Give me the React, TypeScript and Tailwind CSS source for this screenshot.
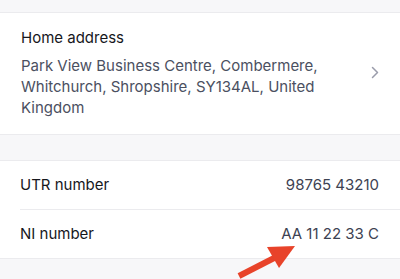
import React from "react";

function Chevron() {
  return (
    <svg width="8" height="13" viewBox="0 0 8 13" className="shrink-0">
      <path d="M1.5 1.5 L6.5 6.5 L1.5 11.5" fill="none" stroke="#9a9cab" strokeWidth="1.5" strokeLinecap="round" strokeLinejoin="round" />
    </svg>
  );
}

function Row({ label, value, divider }: { label: string; value: string; divider?: boolean }) {
  return (
    <div className="pl-5">
      <div className={`flex items-center justify-between pr-[21px] ${divider ? "h-[49px] border-b border-[#ebebee]" : "h-[48px]"}`}>
        <span className="text-[15px] text-[#16171c]">{label}</span>
        <span className="text-[15px] text-[#3d4252]">{value}</span>
      </div>
    </div>
  );
}

export default function App() {
  return (
    <div className="relative h-[279px] w-[400px] overflow-hidden bg-[#f7f7f9]" style={{ fontFamily: "Inter, 'Noto Sans', sans-serif" }}>
      <div className="h-[12px]" />
      <div className="border-y border-[#ebebee] bg-white">
        <div className="flex items-center justify-between pb-[16px] pl-[21px] pr-[21px] pt-[14px]">
          <div className="flex flex-col">
            <span className="text-[15px] leading-[22px] text-[#16171c]">Home address</span>
            <span className="mt-[6px] w-[300px] text-[15px] leading-[21px] text-[#4b5061]">
              Park View Business Centre, Combermere, Whitchurch, Shropshire, SY134AL, United Kingdom
            </span>
          </div>
          <Chevron />
        </div>
      </div>
      <div className="h-[25px]" />
      <div className="border-y border-[#ebebee] bg-white">
        <Row label="UTR number" value="98765 43210" divider />
        <Row label="NI number" value="AA 11 22 33 C" />
      </div>
      <svg className="absolute left-0 top-0" width="400" height="279" viewBox="0 0 400 279">
        <line x1="239" y1="276" x2="280" y2="255" stroke="#e8432a" strokeWidth="6" strokeLinecap="butt" />
        <polygon points="295,246 267,247 279,268" fill="#e8432a" />
      </svg>
    </div>
  );
}
